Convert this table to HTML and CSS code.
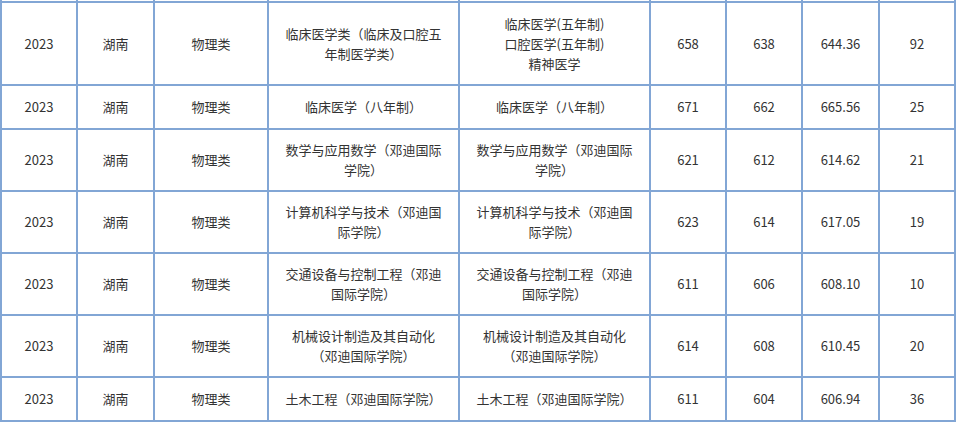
FILE: index.html
```html
<!DOCTYPE html>
<html lang="zh-CN">
<head>
<meta charset="utf-8">
<title>录取分数</title>
<link rel="stylesheet" href="styles.css">
</head>
<body>
<table class="scores">
  <colgroup>
    <col class="c-year"><col class="c-prov"><col class="c-type"><col class="c-major"><col class="c-sub">
    <col class="c-num"><col class="c-num"><col class="c-avg"><col class="c-num">
  </colgroup>
  <tbody>
    <tr class="cut"><td></td><td></td><td></td><td></td><td></td><td></td><td></td><td></td><td></td></tr>
    <tr class="tall">
      <td>2023</td><td>湖南</td><td>物理类</td>
      <td>临床医学类（临床及口腔五年制医学类）</td>
      <td>临床医学(五年制)<br>口腔医学(五年制)<br>精神医学</td>
      <td>658</td><td>638</td><td>644.36</td><td>92</td>
    </tr>
    <tr class="short">
      <td>2023</td><td>湖南</td><td>物理类</td>
      <td>临床医学（八年制）</td>
      <td>临床医学（八年制）</td>
      <td>671</td><td>662</td><td>665.56</td><td>25</td>
    </tr>
    <tr class="mid">
      <td>2023</td><td>湖南</td><td>物理类</td>
      <td>数学与应用数学（邓迪国际学院）</td>
      <td>数学与应用数学（邓迪国际学院）</td>
      <td>621</td><td>612</td><td>614.62</td><td>21</td>
    </tr>
    <tr class="mid">
      <td>2023</td><td>湖南</td><td>物理类</td>
      <td>计算机科学与技术（邓迪国际学院）</td>
      <td>计算机科学与技术（邓迪国际学院）</td>
      <td>623</td><td>614</td><td>617.05</td><td>19</td>
    </tr>
    <tr class="mid">
      <td>2023</td><td>湖南</td><td>物理类</td>
      <td>交通设备与控制工程（邓迪国际学院）</td>
      <td>交通设备与控制工程（邓迪国际学院）</td>
      <td>611</td><td>606</td><td>608.10</td><td>10</td>
    </tr>
    <tr class="mid">
      <td>2023</td><td>湖南</td><td>物理类</td>
      <td>机械设计制造及其自动化（邓迪国际学院）</td>
      <td>机械设计制造及其自动化（邓迪国际学院）</td>
      <td>614</td><td>608</td><td>610.45</td><td>20</td>
    </tr>
    <tr class="short">
      <td>2023</td><td>湖南</td><td>物理类</td>
      <td>土木工程（邓迪国际学院）</td>
      <td>土木工程（邓迪国际学院）</td>
      <td>611</td><td>604</td><td>606.94</td><td>36</td>
    </tr>
  </tbody>
</table>
</body>
</html>
```

FILE: styles.css
```css
html, body {
  margin: 0;
  padding: 0;
  background: #ffffff;
}

.scores {
  border-collapse: collapse;
  table-layout: fixed;
  width: 956px;
  font-family: "Noto Sans CJK SC", "Noto Sans", sans-serif;
  font-size: 13px;
  line-height: 20px;
  color: #333333;
}

.c-year { width: 76px; }
.c-prov { width: 77px; }
.c-type { width: 114px; }
.c-major { width: 191px; }
.c-sub { width: 191px; }
.c-num { width: 76px; }
.c-avg { width: 77px; }

.scores td {
  border: 2px solid #82a6d5;
  padding: 0 12px;
  text-align: center;
  vertical-align: middle;
}

.scores tr.cut td {
  height: 1px;
  padding: 0;
  border-top: none;
}

.scores tr.tall td { height: 81px; }
.scores tr.short td { height: 42px; }
.scores tr.mid td { height: 60px; }
```
